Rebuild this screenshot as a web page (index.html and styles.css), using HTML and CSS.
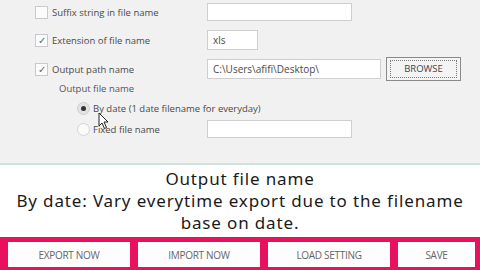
FILE: index.html
```html
<!DOCTYPE html>
<html lang="en">
<head>
  <meta charset="UTF-8">
  <title>Export Settings</title>
  <link rel="stylesheet" href="styles.css">
</head>
<body>

<div class="panel">
  <div class="row row-suffix">
    <div class="left">
      <span class="check"></span>
      <span class="label">Suffix string in file name</span>
    </div>
    <div class="textbox wide"></div>
  </div>
  <div class="row row-ext">
    <div class="left">
      <span class="check checked">&#10003;</span>
      <span class="label">Extension of file name</span>
    </div>
    <div class="textbox short">xls</div>
  </div>
  <div class="row row-path">
    <div class="left">
      <span class="check checked">&#10003;</span>
      <span class="label">Output path name</span>
    </div>
    <div class="textbox path">C:\Users\afifi\Desktop\</div>
    <div class="browse"><span>BROWSE</span></div>
  </div>
  <div class="row row-group">
    <span class="group-label">Output file name</span>
  </div>
  <div class="row row-radio">
    <div class="left radio-left">
      <span class="radio selected"></span>
      <span class="label">By date (1 date filename for everyday)</span>
      <svg class="cursor" width="12" height="18" viewBox="0 0 12 18">
        <path d="M1 1 L1 14 L4 11 L6.5 16.5 L8.5 15.5 L6 10 L10 10 Z" fill="#fff" stroke="#222" stroke-width="1"/>
      </svg>
    </div>
  </div>
  <div class="row row-radio2">
    <div class="left radio-left">
      <span class="radio"></span>
      <span class="label">Fixed file name</span>
    </div>
    <div class="textbox wide"></div>
  </div>
</div>

<div class="caption">
  <p>Output file name</p>
  <p>By date: Vary everytime export due to the filename</p>
  <p>base on date.</p>
</div>

<div class="toolbar">
  <div class="btn">EXPORT NOW</div>
  <div class="btn">IMPORT NOW</div>
  <div class="btn">LOAD SETTING</div>
  <div class="btn btn-save">SAVE</div>
</div>

</body>
</html>
```

FILE: styles.css
```css
body {
  margin: 0;
  padding: 0;
  width: 480px;
  height: 270px;
  overflow: hidden;
  font-family: "Open Sans", "Noto Sans", sans-serif;
  background-color: #ffffff;
}

.panel {
  height: 161px;
  padding-top: 2px;
  background-color: #f1f1f1;
  border-bottom: 2px solid #cfe3dc;
  font-size: 9.5px;
  color: #4a4a4a;
}

.row {
  display: flex;
  align-items: center;
  padding-left: 35px;
}

.row-suffix { height: 20px; }
.row-ext { height: 22px; margin-top: 7px; }
.row-path { height: 24px; margin-top: 6px; }
.row-group { height: 14px; padding-left: 59px; }
.row-radio { height: 20px; margin-top: 3px; }
.row-radio2 { height: 20px; margin-top: 1px; }

.left {
  width: 172px;
  display: flex;
  align-items: center;
  position: relative;
}

.radio-left {
  padding-left: 42px;
  width: 130px;
}

.row-radio .radio-left {
  width: 300px;
}

.check {
  width: 11px;
  height: 11px;
  border: 1px solid #c9c9c9;
  background-color: #fbfbfb;
  margin-right: 4px;
  font-size: 10px;
  line-height: 11px;
  text-align: center;
  color: #666;
}

.radio {
  width: 11px;
  height: 11px;
  border: 1px solid #d4d4d4;
  border-radius: 50%;
  background-color: #fafafa;
  margin-right: 3px;
  position: relative;
}

.radio.selected {
  background-color: #e2e2e2;
  border-color: #cfcfcf;
}

.radio.selected::after {
  content: "";
  position: absolute;
  left: 3px;
  top: 3px;
  width: 5px;
  height: 5px;
  border-radius: 50%;
  background-color: #333;
}

.label {
  white-space: nowrap;
}

.cursor {
  position: absolute;
  left: 63px;
  top: 10px;
}

.group-label {
  color: #555;
}

.textbox {
  height: 16px;
  border: 1px solid #cfcfcf;
  background-color: #fff;
  line-height: 16px;
  padding-left: 5px;
  box-sizing: content-box;
  white-space: nowrap;
  font-size: 10px;
}

.wide { width: 138px; }
.short { width: 44px; height: 18px; line-height: 18px; }
.path { width: 167px; height: 18px; line-height: 18px; }

.browse {
  margin-left: 5px;
  width: 73px;
  height: 22px;
  border: 1px solid #8a8a8a;
  background-color: #f4f4f4;
  display: flex;
  align-items: center;
  justify-content: center;
}

.browse span {
  border: 1px dotted #777;
  width: 65px;
  height: 16px;
  line-height: 16px;
  text-align: center;
  color: #444;
  font-size: 9.5px;
}

.caption {
  height: 66px;
  padding: 3px 0;
  text-align: center;
  font-family: "Noto Sans", sans-serif;
  font-size: 17px;
  color: #1a1a1a;
}

.caption p {
  margin: 0;
  line-height: 22px;
  letter-spacing: 0.85px;
  white-space: nowrap;
}

.toolbar {
  height: 33px;
  box-sizing: border-box;
  padding: 5px 3px 3px 8px;
  background-color: #e8115e;
  display: flex;
  gap: 8px;
}

.btn {
  flex: 0 0 122px;
  background-color: #fdfdfd;
  display: flex;
  align-items: center;
  justify-content: center;
  font-size: 10px;
  color: #666;
  letter-spacing: -0.3px;
}

.btn-save {
  flex: 0 0 77px;
}
```
